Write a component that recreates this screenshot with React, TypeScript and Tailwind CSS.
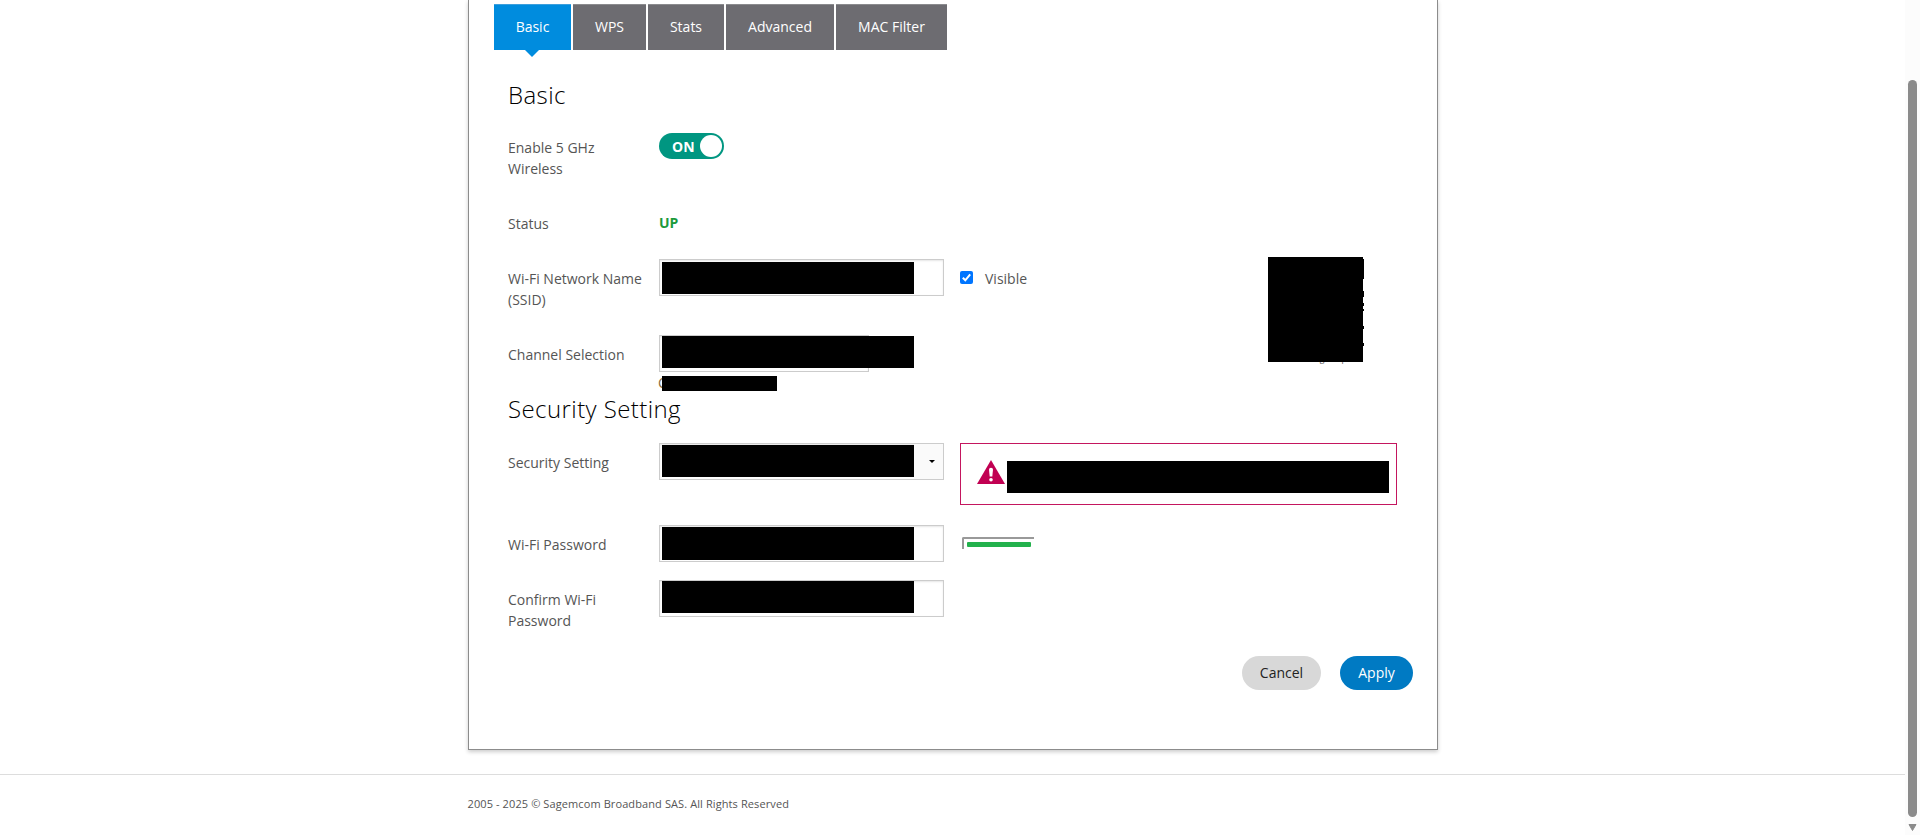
import type { ReactNode } from 'react';

const tabs = [
  { label: 'Basic', width: 'w-[77px]' },
  { label: 'WPS', width: 'w-[73px]' },
  { label: 'Stats', width: 'w-[76px]' },
  { label: 'Advanced', width: 'w-[108px]' },
  { label: 'MAC Filter', width: 'w-[111px]' },
];

function Tabs() {
  return (
    <nav className="ml-[25px] flex gap-[2px] pt-1">
      {tabs.map((tab, i) => (
        <div
          key={tab.label}
          className={`relative flex h-[46px] items-center justify-center border-t pb-px text-sm font-medium text-white ${tab.width} ${
            i === 0 ? 'border-[#3d9fdc] bg-[#008cde]' : 'border-[#8b8b8e] bg-[#6d6c71]'
          }`}
        >
          {tab.label}
          {i === 0 && (
            <svg className="absolute top-[45px] left-[31px]" width="14" height="7" viewBox="0 0 14 7">
              <path d="M0 0H14L7 7Z" fill="#008cde" />
            </svg>
          )}
        </div>
      ))}
    </nav>
  );
}

function Row({ label, height, pad, children }: { label: string; height: string; pad: string; children: ReactNode }) {
  return (
    <div className={`flex items-start ${height}`}>
      <div className={`w-[151px] shrink-0 pr-3 leading-[21px] ${pad}`}>{label}</div>
      {children}
    </div>
  );
}

function Field({ width = 'w-[285px]', mask, children }: { width?: string; mask: string; children?: ReactNode }) {
  return (
    <div className={`relative h-[37px] shrink-0 border border-[#ccc] bg-white shadow-[inset_0_1px_2px_rgba(0,0,0,0.1)] ${width}`}>
      {children}
      <div className={`absolute left-[2px] w-[252px] bg-black ${mask}`} />
    </div>
  );
}

function Panel() {
  return (
    <main className="ml-[468px] h-[750px] w-[970px] border-x border-b border-[#8c8c8c] bg-white shadow-[0_2px_4px_rgba(0,0,0,0.2)]">
      <Tabs />
      <div className="pl-[39px]">
        <h2 className="h-[83px] pt-[29px] text-2xl leading-[32px] font-light tracking-[0.42px] text-black">Basic</h2>

        <Row label="Enable 5 GHz Wireless" height="h-[77px]" pad="pt-1">
          <div className="flex h-[26px] w-[65px] items-center justify-between rounded-full bg-[#009681] pr-[2px] pl-[13px]">
            <span className="pt-[2px] text-sm font-bold text-white">ON</span>
            <span className="size-[22px] rounded-full bg-white" />
          </div>
        </Row>

        <Row label="Status" height="h-[49px]" pad="pt-[3px]">
          <span className="pt-[2px] leading-[21px] font-bold text-[#1c9a3c]">UP</span>
        </Row>

        <div className="flex h-[76px] items-start">
          <div className="w-[151px] shrink-0 pt-[9px] leading-[21px]">Wi-Fi Network Name (SSID)</div>
          <Field mask="top-[2px] h-[32px]" />
          <div className="flex w-[324px] shrink-0 items-start pt-[9px] pl-4">
            <svg className="mt-[3px]" width="13" height="13" viewBox="0 0 13 13">
              <rect width="13" height="13" rx="2" fill="#0075ff" />
              <path d="M2.8 6.8L5.3 9.3L10.2 3.3" fill="none" stroke="#fff" strokeWidth="2" />
            </svg>
            <span className="pl-3 leading-[21px]">Visible</span>
          </div>
          <div className="relative -mt-[2px] h-[105px] w-[96px] shrink-0">
            <div className="absolute top-[95px] left-1 text-[8.5px] leading-[13px] whitespace-nowrap">Click on image to print</div>
            <svg className="relative" width="96" height="105" viewBox="0 0 96 105">
              <path d="M0 0H95V2H96V22H95V34H96V40H95V46H96V49H95V52H96V54H95V69H96V72H95V86H96V89H95V105H0Z" fill="#000" />
            </svg>
          </div>
        </div>

        <Row label="Channel Selection" height="h-[65px]" pad="pt-[9px]">
          <div className="relative">
            <Field width="w-[210px]" mask="top-0 h-[32px]" />
            <span className="absolute top-[39px] -left-px text-sm leading-[18px] text-[#8a6d3b]">C</span>
            <div className="absolute top-[41px] left-[3px] h-[15px] w-[115px] bg-black" />
          </div>
        </Row>

        <h2 className="h-[43px] -translate-y-[7px] text-2xl leading-[32px] font-light tracking-[0.42px] text-black">Security Setting</h2>

        <Row label="Security Setting" height="h-[82px]" pad="pt-[9px]">
          <Field mask="top-[1px] h-[32px]">
            <div className="ml-[254px] flex h-full items-center justify-center bg-[#fafafa] pl-[6px]">
              <svg width="6" height="3" viewBox="0 0 6 3">
                <path d="M0 0H6L3 3Z" fill="#000" />
              </svg>
            </div>
          </Field>
          <div className="ml-4 flex h-[62px] w-[437px] items-start border border-[#c4165f] pt-4 pl-4">
            <svg width="28" height="24" viewBox="0 0 28 24">
              <path d="M14 0L28 24H0Z" fill="#c10052" />
              <path d="M12 9.5Q12 7.8 14 7.8T16 9.5L15.3 16.5H12.7Z" fill="#fff" />
              <circle cx="14" cy="19.7" r="1.8" fill="#fff" />
            </svg>
            <div className="mt-[1px] ml-[2px] h-[32px] w-[382px] bg-black" />
          </div>
        </Row>

        <Row label="Wi-Fi Password" height="h-[55px]" pad="pt-[9px]">
          <Field mask="top-[1px] h-[33px]" />
          <div className="mt-[12px] ml-[18px] h-[12px] w-[72px] rounded-tl-[2px] border-t-2 border-l-2 border-t-[#999] border-l-[#999] pt-[3px] pl-[3px]">
            <div className="h-[5px] w-[64px] rounded-[1px] bg-[#22b14c]" />
          </div>
        </Row>

        <Row label="Confirm Wi-Fi Password" height="h-[76px]" pad="pt-[9px]">
          <Field mask="top-0 h-[32px]" />
        </Row>
      </div>

      <div className="flex justify-end gap-[19px] pr-6 text-sm">
        <button className="h-[34px] w-[79px] rounded-full bg-[#d8d8d8] text-[#222]">Cancel</button>
        <button className="h-[34px] w-[73px] rounded-full bg-[#007ac3] font-medium text-white">Apply</button>
      </div>
    </main>
  );
}

export default function App() {
  return (
    <div className="flex h-[835px] w-full overflow-hidden bg-white text-sm text-[#555] [font-family:'Open_Sans',sans-serif]">
      <div className="w-[1905px] shrink-0">
        <Panel />
        <footer className="mt-6 border-t border-[#ddd] pt-[20px] pl-[467.5px] text-[11px] leading-[17px] tracking-[0.1px]">
          2005 - 2025 © Sagemcom Broadband SAS. All Rights Reserved
        </footer>
      </div>
      <div className="w-[15px] shrink-0 bg-[#fcfcfc] pt-20 pl-[3px]">
        <div className="h-[737px] w-[9px] rounded-full bg-[#8b8b8b]" />
        <svg className="mt-[7px]" width="9" height="8" viewBox="0 0 9 8">
          <path d="M1 0.5H8L4.5 6.5Z" fill="#8b8b8b" stroke="#8b8b8b" strokeLinejoin="round" />
        </svg>
      </div>
    </div>
  );
}
